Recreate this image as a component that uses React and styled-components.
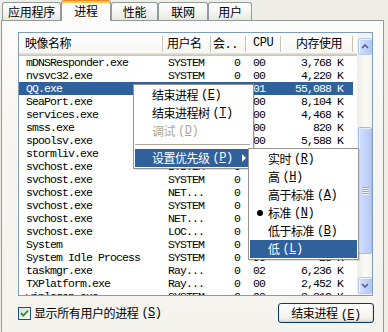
import React from "react";
import styled, { createGlobalStyle } from "styled-components";

const SIMSUN = `"Liberation Mono", "Noto Sans CJK SC", monospace`;
const SELECT = "#31619b";

const GlobalStyle = createGlobalStyle`
  *, *::before, *::after { box-sizing: border-box; }
  html, body { margin: 0; padding: 0; background: #eeede6; }
  body { font-family: ${SIMSUN}; font-size: 12px; color: #000; }
`;

const columns = [
  { title: "映像名称", width: 144, head: "left", cell: "left", hp: 6, cp: 7 },
  { title: "用户名", width: 48, head: "left", cell: "left", hp: 4, cp: 5 },
  { title: "会..", width: 35, head: "left", cell: "right", hp: 2, cp: 6 },
  { title: "CPU", width: 35, head: "left", cell: "left", hp: 7, cp: 7 },
  { title: "内存使用", width: 72, head: "right", cell: "right", hp: 11, cp: 10 },
];

const rows = [
  ["mDNSResponder.exe", "SYSTEM", "0", "00", "3,768 K"],
  ["nvsvc32.exe", "SYSTEM", "0", "00", "4,220 K"],
  ["QQ.exe", "Ray...", "0", "01", "55,088 K"],
  ["SeaPort.exe", "SYSTEM", "0", "00", "8,104 K"],
  ["services.exe", "SYSTEM", "0", "00", "4,468 K"],
  ["smss.exe", "SYSTEM", "0", "00", "820 K"],
  ["spoolsv.exe", "SYSTEM", "0", "00", "5,588 K"],
  ["stormliv.exe", "Ray...", "0", "00", "3,016 K"],
  ["svchost.exe", "SYSTEM", "0", "00", "5,084 K"],
  ["svchost.exe", "SYSTEM", "0", "00", "4,576 K"],
  ["svchost.exe", "NET...", "0", "00", "3,960 K"],
  ["svchost.exe", "SYSTEM", "0", "00", "26,572 K"],
  ["svchost.exe", "NET...", "0", "00", "3,104 K"],
  ["svchost.exe", "LOC...", "0", "00", "4,940 K"],
  ["System", "SYSTEM", "0", "00", "236 K"],
  ["System Idle Process", "SYSTEM", "0", "96", "28 K"],
  ["taskmgr.exe", "Ray...", "0", "02", "6,236 K"],
  ["TXPlatform.exe", "Ray...", "0", "00", "2,452 K"],
  ["winlogon.exe", "SYSTEM", "0", "00", "3,812 K"],
];

const tabs = [
  { label: "应用程序", width: 59 },
  { label: "进程", width: 50, active: true },
  { label: "性能", width: 47 },
  { label: "联网", width: 50 },
  { label: "用户", width: 44 },
];

const Key = ({ k }) => (
  <Mnemonic>
    (<u>{k}</u>)
  </Mnemonic>
);

const ChevronUp = () => (
  <svg width="8" height="5" viewBox="0 0 8 5">
    <path d="M1 4 L4 1 L7 4" fill="none" stroke="#4d6185" strokeWidth="1.6" />
  </svg>
);

const ChevronDown = () => (
  <svg width="8" height="5" viewBox="0 0 8 5">
    <path d="M1 1 L4 4 L7 1" fill="none" stroke="#4d6185" strokeWidth="1.6" />
  </svg>
);

function App() {
  return (
    <Window>
      <GlobalStyle />
      <TabStrip>
        {tabs.map((t) => (
          <Tab key={t.label} $w={t.width} $active={t.active}>
            {t.label}
          </Tab>
        ))}
      </TabStrip>
      <Panel>
        <ListBox>
          <ListArea>
            <Head>
              {columns.map((c) => (
                <HeadCell key={c.title} $w={c.width} $align={c.head} $pad={c.hp}>
                  {c.title}
                </HeadCell>
              ))}
            </Head>
            {rows.map((r, i) => (
              <Row key={i} $selected={i === 2}>
                {r.map((v, j) => (
                  <Cell
                    key={j}
                    $w={columns[j].width}
                    $align={columns[j].cell}
                    $pad={columns[j].cp}
                  >
                    {v}
                  </Cell>
                ))}
              </Row>
            ))}
          </ListArea>
          <ScrollBar>
            <ArrowButton>
              <ChevronUp />
            </ArrowButton>
            <Track>
              <Thumb style={{ marginTop: 72, height: 127 }}>
                <Grip />
                <Grip />
                <Grip />
                <Grip />
              </Thumb>
            </Track>
            <ArrowButton>
              <ChevronDown />
            </ArrowButton>
          </ScrollBar>
        </ListBox>
        <Footer>
          <CheckLabel>
            <CheckBox>
              <svg width="11" height="11" viewBox="0 0 11 11">
                <path
                  d="M2 5 L4.3 7.6 L9 2.6"
                  fill="none"
                  stroke="#21a121"
                  strokeWidth="2"
                />
              </svg>
            </CheckBox>
            显示所有用户的进程
            <Key k="S" />
          </CheckLabel>
          <PushButton>
            结束进程
            <Key k="E" />
          </PushButton>
        </Footer>
      </Panel>

      <Menu $x={133} $y={84} $w={121}>
        <MenuItem $indent={17}>
          结束进程
          <Key k="E" />
        </MenuItem>
        <MenuItem $indent={17}>
          结束进程树
          <Key k="T" />
        </MenuItem>
        <MenuItem $indent={17} $disabled>
          调试
          <Key k="D" />
        </MenuItem>
        <Separator />
        <MenuItem $indent={17} $active>
          设置优先级
          <Key k="P" />
          <Arrow />
        </MenuItem>
      </Menu>

      <Menu $x={248} $y={148} $w={111}>
        <MenuItem $indent={18}>
          实时
          <Key k="R" />
        </MenuItem>
        <MenuItem $indent={18}>
          高
          <Key k="H" />
        </MenuItem>
        <MenuItem $indent={18}>
          高于标准
          <Key k="A" />
        </MenuItem>
        <MenuItem $indent={18}>
          <Bullet />
          标准
          <Key k="N" />
        </MenuItem>
        <MenuItem $indent={18}>
          低于标准
          <Key k="B" />
        </MenuItem>
        <MenuItem $indent={18} $active>
          低
          <Key k="L" />
        </MenuItem>
      </Menu>
    </Window>
  );
}

const Window = styled.div`
  position: relative;
  width: 388px;
  height: 332px;
  overflow: hidden;
  padding: 0 4px 0 1px;
  display: flex;
  flex-direction: column;
  background: #eeede6;
`;

const TabStrip = styled.div`
  display: flex;
  align-items: flex-end;
  height: 20px;
  padding-left: 1px;
`;

const Tab = styled.div`
  position: relative;
  z-index: ${(p) => (p.$active ? 2 : 1)};
  width: ${(p) => p.$w}px;
  height: ${(p) => (p.$active ? 21 : 18)}px;
  margin-bottom: ${(p) => (p.$active ? -1 : 0)}px;
  display: flex;
  align-items: center;
  justify-content: center;
  padding-top: ${(p) => (p.$active ? 0 : 1)}px;
  font-size: 12px;
  letter-spacing: -0.3px;
  border: 1px solid #919b9c;
  border-bottom: none;
  border-radius: 3px 3px 0 0;
  background: ${(p) =>
    p.$active ? "#fcfcfb" : "linear-gradient(#ffffff, #f3f3ef 60%, #e8e8e2)"};
  box-shadow: ${(p) =>
    p.$active ? "inset 0 2px 0 #ffc83c" : "none"};
  border-top-color: ${(p) => (p.$active ? "#e68b2c" : "#919b9c")};
`;

const Panel = styled.div`
  flex: 1;
  border: 1px solid #919b9c;
  border-bottom: none;
  background: linear-gradient(#fcfcfb, #f6f5f1 40%, #f4f3ee);
  padding: 11px 10px 0 16px;
`;

const ListBox = styled.div`
  width: 355px;
  height: 264px;
  border: 1px solid #7f9db9;
  background: #fff;
  display: flex;
  overflow: hidden;
`;

const ListArea = styled.div`
  flex: 1;
  overflow: hidden;
`;

const Head = styled.div`
  display: flex;
  height: 23px;
  padding-bottom: 3px;
  background: linear-gradient(#ffffff, #f7f6f2);
  box-shadow: inset 0 -1px #cbc7b8, inset 0 -2px #d6d2c2, inset 0 -3px #e2e2da;
`;

const HeadCell = styled.div`
  position: relative;
  flex: none;
  width: ${(p) => p.$w}px;
  display: flex;
  align-items: center;
  justify-content: ${(p) => (p.$align === "right" ? "flex-end" : "flex-start")};
  padding: ${(p) => (p.$align === "right" ? `0 ${p.$pad}px 0 0` : `0 0 0 ${p.$pad}px`)};
  font-size: 12px;
  letter-spacing: -0.5px;
  white-space: nowrap;
  &::after {
    content: "";
    position: absolute;
    right: 0;
    top: 3px;
    bottom: 1px;
    width: 1px;
    background: #c7c5b6;
    box-shadow: 1px 0 #fff;
  }
`;

const Row = styled.div`
  display: flex;
  width: 334px;
  height: 13px;
  line-height: 13px;
  font-size: 11.5px;
  letter-spacing: -0.9px;
  background: ${(p) => (p.$selected ? SELECT : "transparent")};
  color: ${(p) => (p.$selected ? "#fff" : "#000")};
`;

const Cell = styled.div`
  flex: none;
  width: ${(p) => p.$w}px;
  text-align: ${(p) => p.$align};
  padding: ${(p) => (p.$align === "right" ? `0 ${p.$pad}px 0 0` : `0 0 0 ${p.$pad}px`)};
  white-space: pre;
  overflow: hidden;
`;

const ScrollBar = styled.div`
  flex: none;
  width: 15px;
  display: flex;
  flex-direction: column;
  padding: 5px 0 1px;
  background: #f4f3ee;
  border-left: 1px solid #f0efea;
`;

const ArrowButton = styled.div`
  height: 17px;
  display: flex;
  align-items: center;
  justify-content: center;
  border: 1px solid #b4c8f6;
  border-radius: 2px;
  background: linear-gradient(90deg, #d5e1fd, #c0d1fa 60%, #b3c7f4);
  box-shadow: inset 1px 1px #eef3ff;
`;

const Track = styled.div`
  flex: 1;
  display: flex;
  flex-direction: column;
  background: linear-gradient(90deg, #eeede5, #fbfbf8 50%, #f3f2ec);
`;

const Thumb = styled.div`
  display: flex;
  flex-direction: column;
  align-items: center;
  justify-content: center;
  gap: 1px;
  border: 1px solid #a4bcee;
  border-radius: 2px;
  background: linear-gradient(90deg, #d2defd, #c4d4fb 50%, #b6c9f5);
  box-shadow: inset 1px 1px #e8effe;
`;

const Grip = styled.div`
  width: 7px;
  height: 1px;
  background: #8ea7de;
  box-shadow: 0 1px #eef3fe;
`;

const Footer = styled.div`
  display: flex;
  align-items: center;
  justify-content: space-between;
  margin-top: 7px;
  width: 356px;
`;

const CheckLabel = styled.label`
  display: flex;
  align-items: center;
  font-size: 12px;
  letter-spacing: -0.4px;
`;

const CheckBox = styled.span`
  width: 13px;
  height: 13px;
  margin-right: 3px;
  display: flex;
  align-items: center;
  justify-content: center;
  border: 1px solid #1c5180;
  background: linear-gradient(135deg, #dcdcd7, #ffffff);
`;

const PushButton = styled.button`
  width: 96px;
  height: 20px;
  padding: 0;
  border: 1px solid #003c74;
  border-radius: 3px;
  font-family: ${SIMSUN};
  font-size: 12px;
  letter-spacing: -0.4px;
  color: #000;
  background: linear-gradient(#ffffff, #f5f4ef 70%, #e3e0d6);
  box-shadow: inset 0 -1px #d6d0c5, inset -1px 0 #e5e2da;
`;

const Mnemonic = styled.span`
  margin-left: 3px;
  letter-spacing: -0.5px;
  u {
    text-decoration: underline;
    text-underline-offset: 1px;
  }
`;

const Menu = styled.div`
  position: absolute;
  z-index: 5;
  left: ${(p) => p.$x}px;
  top: ${(p) => p.$y}px;
  width: ${(p) => p.$w}px;
  padding: 1px;
  background: #fff;
  border: 1px solid #979693;
  box-shadow: 1px 1px 0 rgba(0, 0, 0, 0.12);
`;

const MenuItem = styled.div`
  position: relative;
  height: 18px;
  display: flex;
  align-items: center;
  padding-left: ${(p) => p.$indent}px;
  font-size: 12px;
  letter-spacing: -0.5px;
  white-space: nowrap;
  color: ${(p) => (p.$disabled ? "#aca899" : p.$active ? "#fff" : "#000")};
  background: ${(p) => (p.$active ? SELECT : "transparent")};
`;

const Separator = styled.div`
  height: 1px;
  margin: 4px 2px 4px 0;
  background: #aca899;
`;

const Arrow = styled.span`
  margin-left: auto;
  margin-right: 6px;
  width: 0;
  height: 0;
  border-top: 4px solid transparent;
  border-bottom: 4px solid transparent;
  border-left: 4px solid #fff;
`;

const Bullet = styled.span`
  position: absolute;
  left: 7px;
  top: 6px;
  width: 6px;
  height: 6px;
  border-radius: 50%;
  background: #000;
`;

export default App;
